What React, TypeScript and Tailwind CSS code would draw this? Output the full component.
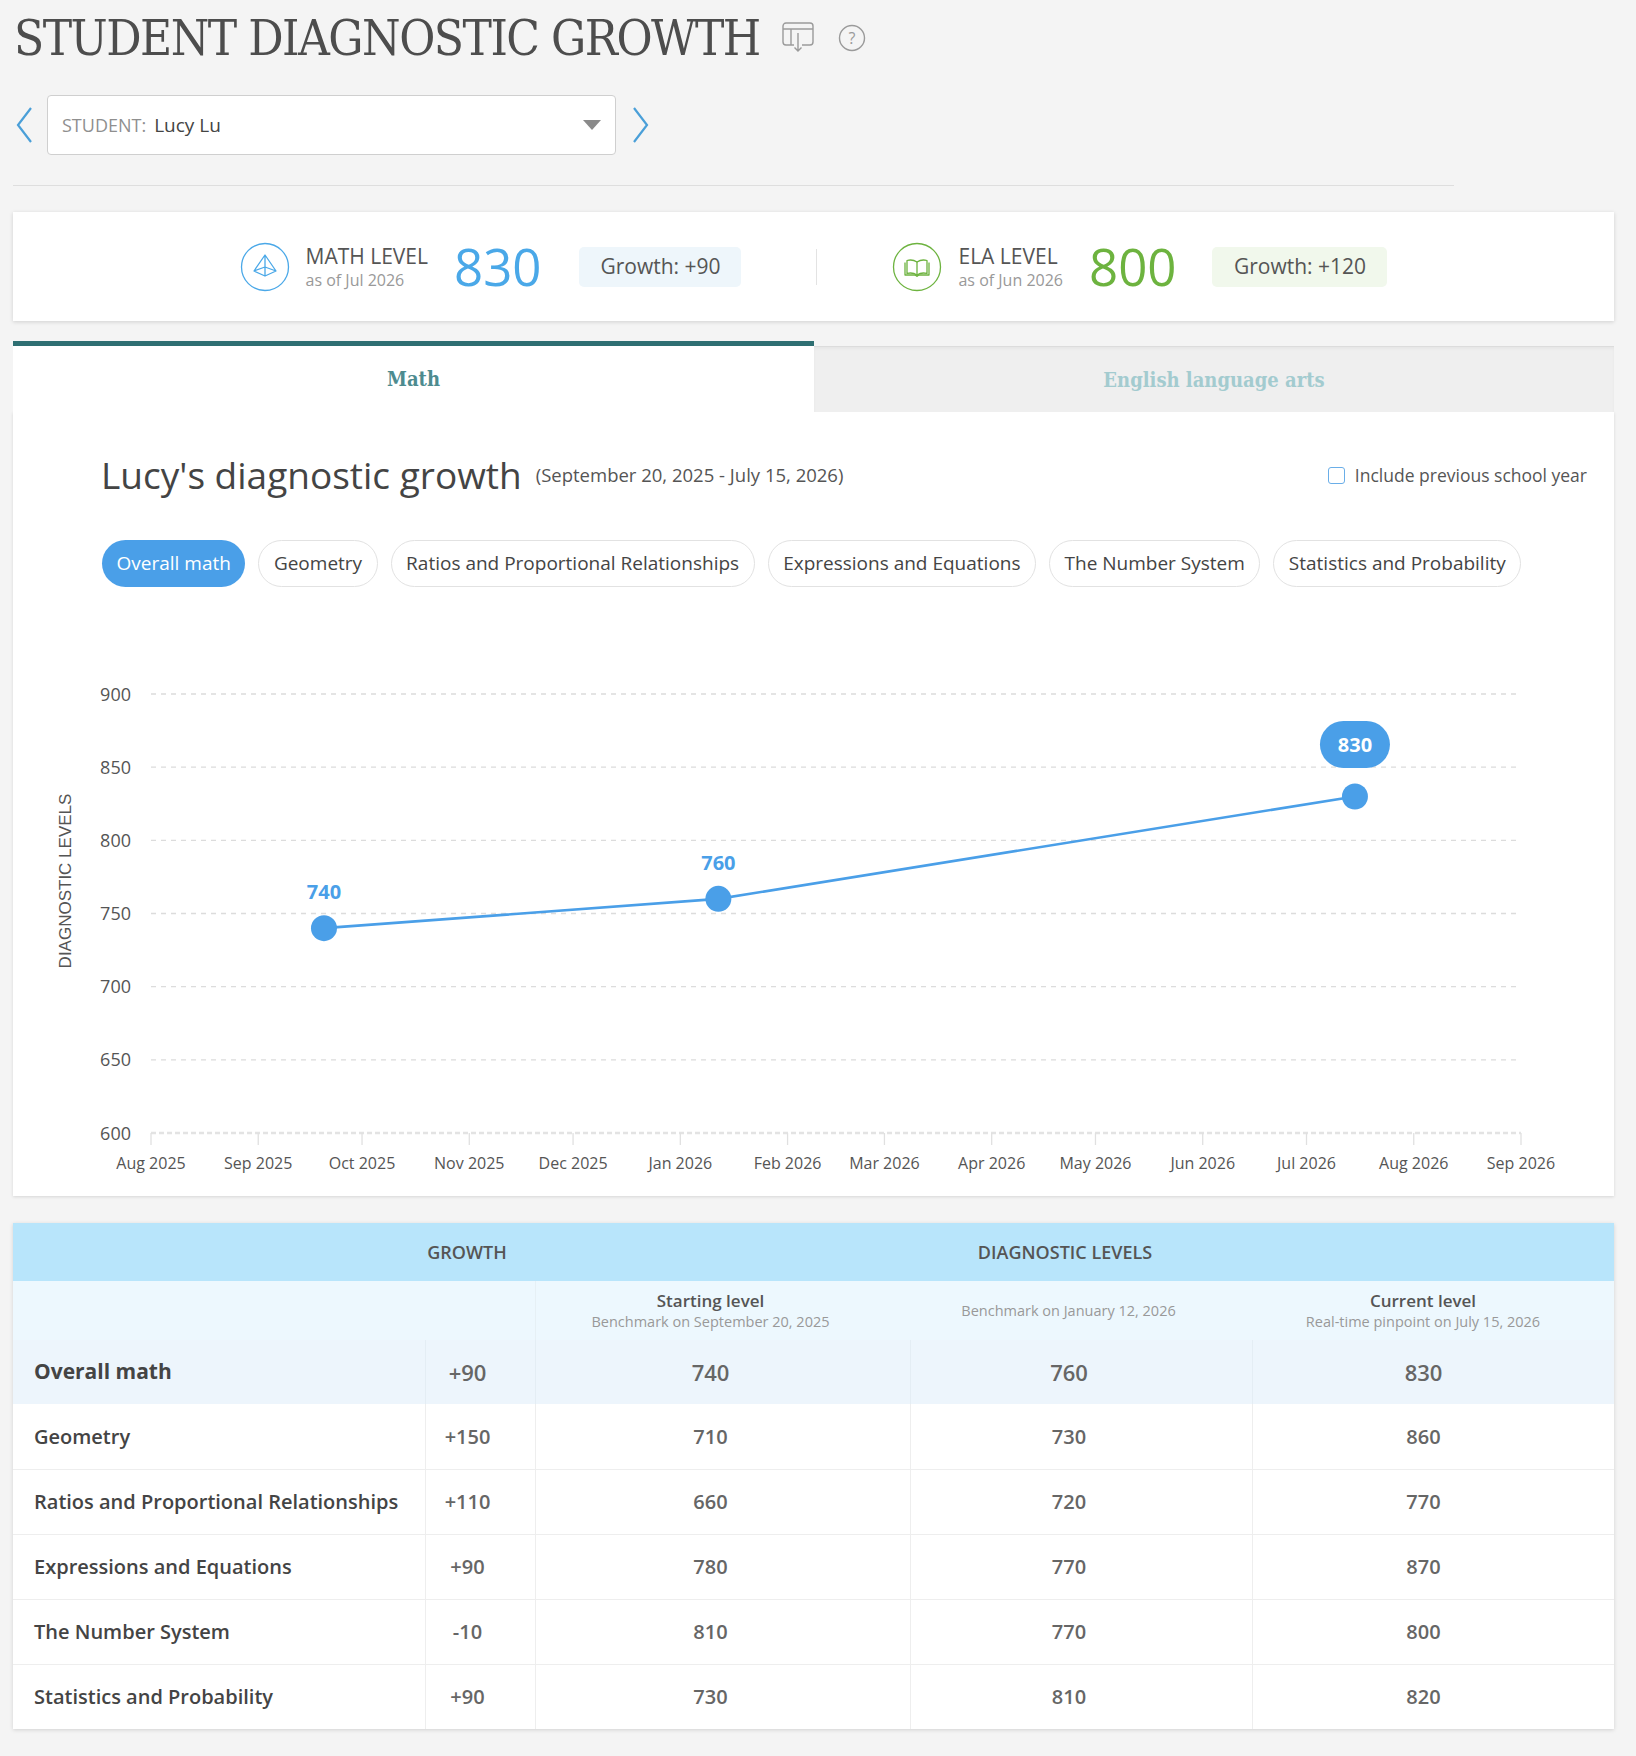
import React from "react";

const BLUE = "#4a9fe8";

const pills = [
  "Overall math",
  "Geometry",
  "Ratios and Proportional Relationships",
  "Expressions and Equations",
  "The Number System",
  "Statistics and Probability",
];

const months = [
  ["Aug 2025", 0],
  ["Sep 2025", 31],
  ["Oct 2025", 61],
  ["Nov 2025", 92],
  ["Dec 2025", 122],
  ["Jan 2026", 153],
  ["Feb 2026", 184],
  ["Mar 2026", 212],
  ["Apr 2026", 243],
  ["May 2026", 273],
  ["Jun 2026", 304],
  ["Jul 2026", 334],
  ["Aug 2026", 365],
  ["Sep 2026", 396],
] as const;

const points = [
  { day: 50, value: 740 },
  { day: 164, value: 760 },
  { day: 348, value: 830 },
];

const rows = [
  ["Geometry", "+150", "710", "730", "860"],
  ["Ratios and Proportional Relationships", "+110", "660", "720", "770"],
  ["Expressions and Equations", "+90", "780", "770", "870"],
  ["The Number System", "-10", "810", "770", "800"],
  ["Statistics and Probability", "+90", "730", "810", "820"],
];

// chart coordinate helpers (svg space, card-relative)
const px = (day: number) => 138 + day * 3.4596;
const py = (v: number) => 533 - (v - 600) * 1.4633;

function TableIcon() {
  return (
    <svg width="32" height="32" viewBox="0 0 32 32" fill="none" stroke="#9a9a9a" strokeWidth="1.4">
      <path d="M12 23H4a3 3 0 0 1-3-3V4a3 3 0 0 1 3-3h24a3 3 0 0 1 3 3v16a3 3 0 0 1-3 3h-8" />
      <path d="M1 7h30M9 7v16" />
      <path d="M16 11v18M12.5 25.5L16 29l3.5-3.5" />
    </svg>
  );
}

function HelpIcon() {
  return (
    <svg width="28" height="28" viewBox="0 0 28 28" fill="none">
      <circle cx="14" cy="14" r="12.5" stroke="#9a9a9a" strokeWidth="1.4" />
      <text x="14" y="19.5" textAnchor="middle" fontSize="16" fill="#9a9a9a" fontFamily="Open Sans, sans-serif">
        ?
      </text>
    </svg>
  );
}

function Chevron({ dir }: { dir: "left" | "right" }) {
  return (
    <svg width="18" height="38" viewBox="0 0 18 38" fill="none" stroke="#4a9fd8" strokeWidth="2.2">
      {dir === "left" ? <path d="M16 2L3 19l13 17" /> : <path d="M2 2l13 17L2 36" />}
    </svg>
  );
}

function PyramidIcon() {
  return (
    <svg width="50" height="50" viewBox="0 0 50 50" fill="none" stroke="#4aa8e8" strokeWidth="1.3" strokeLinejoin="round">
      <circle cx="25" cy="25" r="23.5" />
      <path d="M25 13L14 29l11 5 11-5zM25 13v21M14 29l11-4 11 4M25 13v12" />
    </svg>
  );
}

function BookIcon() {
  return (
    <svg width="50" height="50" viewBox="0 0 50 50" fill="none" stroke="#6db33f" strokeWidth="1.3" strokeLinejoin="round">
      <circle cx="25" cy="25" r="23.5" />
      <path d="M15 18.5c3.5-1 7-0.5 10 1.5 3-2 6.5-2.5 10-1.5v13c-3.5-1-7-0.5-10 1.5-3-2-6.5-2.5-10-1.5z" />
      <path d="M25 20v13M13 20.5v12.5h9.5c1 0 1.8.6 2.5 1.3.7-.7 1.5-1.3 2.5-1.3H37V20.5" />
    </svg>
  );
}

function Chart() {
  const path = points.map((p, i) => `${i ? "L" : "M"}${px(p.day)} ${py(p.value)}`).join(" ");
  return (
    <svg width="1601" height="596" viewBox="0 0 1601 596" className="block">
      {[900, 850, 800, 750, 700, 650].map((v) => (
        <line key={v} x1={138} x2={1508} y1={py(v)} y2={py(v)} stroke="#dcdcdc" strokeWidth="1.3" strokeDasharray="5 5" />
      ))}
      <line x1={138} x2={1508} y1={py(600)} y2={py(600)} stroke="#e3e3e3" strokeWidth="2.5" strokeDasharray="5 3" />
      {months.map(([label, day]) => (
        <g key={label}>
          <line x1={px(day)} x2={px(day)} y1={py(600)} y2={py(600) + 12} stroke="#e0e0e0" strokeWidth="1.3" />
          <text x={px(day)} y={569} textAnchor="middle" fontSize="16" fill="#555" fontFamily="Open Sans, sans-serif">
            {label}
          </text>
        </g>
      ))}
      {[900, 850, 800, 750, 700, 650, 600].map((v) => (
        <text key={v} x={118} y={py(v) + 6.5} textAnchor="end" fontSize="18" fill="#555" fontFamily="Open Sans, sans-serif">
          {v}
        </text>
      ))}
      <text
        x={54}
        y={281}
        transform="rotate(-90 54 281)"
        textAnchor="middle"
        dominantBaseline="middle"
        fontSize="17"
        fill="#555"
        fontFamily="Liberation Sans, Arial, sans-serif"
      >
        DIAGNOSTIC LEVELS
      </text>
      <path d={path} fill="none" stroke={BLUE} strokeWidth="2.6" />
      {points.map((p) => (
        <circle key={p.day} cx={px(p.day)} cy={py(p.value)} r="13" fill={BLUE} />
      ))}
      {points.slice(0, 2).map((p) => (
        <text
          key={p.day}
          x={px(p.day)}
          y={py(p.value) - 29}
          textAnchor="middle"
          fontSize="20"
          fontWeight="700"
          fill={BLUE}
          fontFamily="Open Sans, sans-serif"
        >
          {p.value}
        </text>
      ))}
      <rect x={px(348) - 35} y={121} width="70" height="47" rx="23.5" fill={BLUE} />
      <text x={px(348)} y={151.5} textAnchor="middle" fontSize="20" fontWeight="700" fill="#fff" fontFamily="Open Sans, sans-serif">
        830
      </text>
    </svg>
  );
}

export default function App() {
  return (
    <div className="min-h-screen bg-[#f4f4f4] pb-[26px] text-[#444] font-['Open_Sans',sans-serif]">
      {/* Page title */}
      <div className="flex h-[72px] items-center pl-[14px] pt-[4px]">
        <h1 className="font-['DejaVu_Serif',serif] font-stretch-condensed text-[49px] font-light leading-none tracking-[-1.5px] text-[#4d4d4d]">
          STUDENT DIAGNOSTIC GROWTH
        </h1>
        <div className="ml-[22px] flex items-center gap-[24px]">
          <TableIcon />
          <HelpIcon />
        </div>
      </div>

      {/* Student picker */}
      <div className="mt-[23px] flex h-[60px] items-center">
        <div className="ml-[15px] w-[32px]">
          <Chevron dir="left" />
        </div>
        <div className="flex h-[60px] w-[569px] items-center justify-between rounded-[4px] border border-[#cfcfcf] bg-white pl-[14px] pr-[14px]">
          <div className="flex items-baseline gap-[8px]">
            <span className="text-[18px] text-[#8f8f8f]">STUDENT:</span>
            <span className="text-[19px] text-[#444]">Lucy Lu</span>
          </div>
          <span className="h-0 w-0 border-l-[9px] border-r-[9px] border-t-[10px] border-l-transparent border-r-transparent border-t-[#8a8a8a]" />
        </div>
        <div className="ml-[16px]">
          <Chevron dir="right" />
        </div>
      </div>

      <div className="ml-[13px] mt-[30px] w-[1441px] border-t border-[#dedede]" />

      {/* Level summary */}
      <div className="ml-[13px] mr-[22px] mt-[26px] flex h-[109px] items-center justify-center bg-white shadow-[0_1px_4px_rgba(0,0,0,0.15)]">
        <div className="flex items-center">
          <PyramidIcon />
          <div className="ml-[16px] leading-tight">
            <div className="text-[21px] text-[#555]">MATH LEVEL</div>
            <div className="text-[16px] text-[#999]">as of Jul 2026</div>
          </div>
          <div className="ml-[26px] text-[51px] leading-none text-[#4aa8e8]">830</div>
          <div className="ml-[38px] flex h-[40px] w-[162px] items-center justify-center rounded-[5px] bg-[#eef6fb] text-[21px] text-[#555]">
            Growth: +90
          </div>
        </div>
        <div className="mx-[75px] h-[36px] border-l border-[#e3e3e3]" />
        <div className="flex items-center">
          <BookIcon />
          <div className="ml-[16px] leading-tight">
            <div className="text-[21px] text-[#555]">ELA LEVEL</div>
            <div className="text-[16px] text-[#999]">as of Jun 2026</div>
          </div>
          <div className="ml-[26px] text-[51px] leading-none text-[#6db33f]">800</div>
          <div className="ml-[36px] flex h-[40px] w-[175px] items-center justify-center rounded-[5px] bg-[#f1f8ec] text-[21px] text-[#555]">
            Growth: +120
          </div>
        </div>
      </div>

      {/* Subject tabs */}
      <div className="ml-[13px] mr-[22px] mt-[20px] flex h-[71px] items-end">
        <div className="flex h-[71px] w-[801px] items-center justify-center border-t-[5px] border-[#2e6f72] bg-white font-['DejaVu_Serif',serif] font-stretch-condensed text-[20px] font-semibold text-[#4d8b8f]">
          Math
        </div>
        <div className="flex h-[66px] flex-1 items-center justify-center border-t border-[#dcdcdc] bg-[#efefef] font-['DejaVu_Serif',serif] font-stretch-condensed text-[20px] font-semibold text-[#a3cbcf] shadow-[inset_0_2px_3px_rgba(0,0,0,0.04)]">
          English language arts
        </div>
      </div>

      {/* Growth chart */}
      <div className="ml-[13px] mr-[22px] bg-white shadow-[0_1px_3px_rgba(0,0,0,0.12)]">
        <div className="flex items-center justify-between pl-[88px] pr-[27px] pt-[39px]">
          <div className="flex items-center">
            <h2 className="text-[37px] leading-[48px] text-[#444]">Lucy's diagnostic growth</h2>
            <span className="ml-[14px] text-[18.5px] text-[#555]">(September 20, 2025 - July 15, 2026)</span>
          </div>
          <label className="flex items-center gap-[10px] text-[17.5px] text-[#555]">
            <span className="h-[17px] w-[17px] rounded-[3px] border-[1.5px] border-[#6aaee8] bg-white" />
            Include previous school year
          </label>
        </div>
        <div className="mt-[41px] flex gap-[13px] pl-[89px]">
          {pills.map((p, i) => (
            <div
              key={p}
              className={
                i === 0
                  ? "flex h-[47px] items-center rounded-full bg-[#4a9fe8] px-[14.5px] text-[19px] text-white"
                  : "flex h-[47px] items-center rounded-full border border-[#e2e2e2] bg-white px-[14.5px] text-[19px] text-[#444]"
              }
            >
              {p}
            </div>
          ))}
        </div>
        <div className="mt-[13px]">
          <Chart />
        </div>
      </div>

      {/* Growth table */}
      <div className="ml-[13px] mr-[22px] mt-[27px] bg-white shadow-[0_1px_4px_rgba(0,0,0,0.14)]">
        <div className="flex h-[58px] items-center bg-[#b8e5fb] text-[18px] font-semibold text-[#555]">
          <div className="ml-[356px] w-[196px] text-center">GROWTH</div>
          <div className="w-[1000px] text-center">DIAGNOSTIC LEVELS</div>
        </div>
        <div className="grid h-[59px] grid-cols-[522px_375px_342px_1fr] bg-[#edf8fe] text-center">
          <div />
          <div className="flex flex-col items-center justify-center border-l border-[#e6f0f5] pr-[25px]">
            <div className="text-[17px] font-semibold leading-[23px] text-[#555]">Starting level</div>
            <div className="text-[14.5px] leading-[20px] text-[#999]">Benchmark on September 20, 2025</div>
          </div>
          <div className="flex items-center justify-center pr-[25px]">
            <div className="text-[14.5px] text-[#999]">Benchmark on January 12, 2026</div>
          </div>
          <div className="flex flex-col items-center justify-center pr-[20px]">
            <div className="text-[17px] font-semibold leading-[23px] text-[#555]">Current level</div>
            <div className="text-[14.5px] leading-[20px] text-[#999]">Real-time pinpoint on July 15, 2026</div>
          </div>
        </div>
        <div className="grid h-[64px] grid-cols-[412px_110px_375px_342px_1fr] items-stretch bg-[#edf5fc] text-[22px] font-semibold text-[#666]">
          <div className="flex items-center pl-[21px] text-[21px] font-bold text-[#444]">Overall math</div>
          <div className="flex items-center justify-center border-l border-[#e4edf4] pr-[26px]">+90</div>
          <div className="flex items-center justify-center border-l border-[#e4edf4] pr-[25px]">740</div>
          <div className="flex items-center justify-center border-l border-[#e4edf4] pr-[25px]">760</div>
          <div className="flex items-center justify-center border-l border-[#e4edf4] pr-[20px]">830</div>
        </div>
        {rows.map((r, i) => (
          <div
            key={r[0]}
            className={
              "grid h-[65px] grid-cols-[412px_110px_375px_342px_1fr] text-[20px] font-semibold text-[#666]" +
              (i > 0 ? " border-t border-[#eeeeee]" : "")
            }
          >
            <div className="flex items-center pl-[21px] text-[20px] font-semibold text-[#444]">{r[0]}</div>
            {r.slice(1).map((c, j) => (
              <div
                key={j}
                className={
                  "flex items-center justify-center border-l border-[#eeeeee] " +
                  (j === 0 ? "pr-[26px]" : j === 3 ? "pr-[20px]" : "pr-[25px]")
                }
              >
                {c}
              </div>
            ))}
          </div>
        ))}
      </div>
    </div>
  );
}
